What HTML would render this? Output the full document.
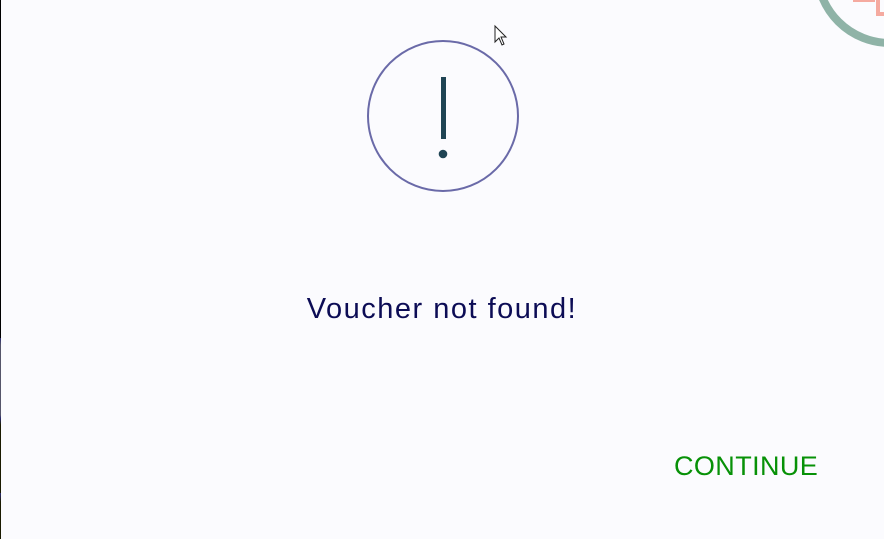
<!DOCTYPE html>
<html><head><meta charset="utf-8"><style>
html,body{margin:0;padding:0;width:884px;height:539px;overflow:hidden;background:#fbfbfe;font-family:"Liberation Sans",sans-serif;position:relative}
.edge{position:absolute;left:0;top:0;width:1px;height:539px;background:linear-gradient(#000 0,#000 338px,#2a2a70 338px,#55556a 345px,#55556a 415px,#2a2a70 418px,#1a1a00 425px,#1a1a00 493px,#2a2a70 493px,#1a1a00 502px)}
.msg{position:absolute;left:0;width:884px;top:293px;text-align:center;font-size:29px;color:#0c0c55;letter-spacing:1.5px}
.btn{position:absolute;left:674px;top:451px;font-size:27px;color:#079107;letter-spacing:0.4px}
</style></head><body>
<div class="edge"></div>
<svg width="884" height="539" style="position:absolute;left:0;top:0">
<circle cx="443" cy="116" r="75" fill="none" stroke="#6a6aa8" stroke-width="2"/>
<rect x="441" y="77" width="5" height="62" fill="#1f4454"/>
<circle cx="443" cy="154" r="4.3" fill="#1f4454"/>
<circle cx="890" cy="-30" r="73" fill="none" stroke="#8fb3a7" stroke-width="8"/>
<rect x="853" y="0" width="22" height="2" fill="#f5aaa0"/>
<path d="M878 0 V14 H884" fill="none" stroke="#f5aaa0" stroke-width="4"/>
<path d="M495 26 L495 42 L499 38 L502 45 L504 44 L501 37 L506 37 Z" fill="#fff" stroke="#222" stroke-width="1"/>
</svg>
<div class="msg">Voucher not found!</div>
<div class="btn">CONTINUE</div>
</body></html>
